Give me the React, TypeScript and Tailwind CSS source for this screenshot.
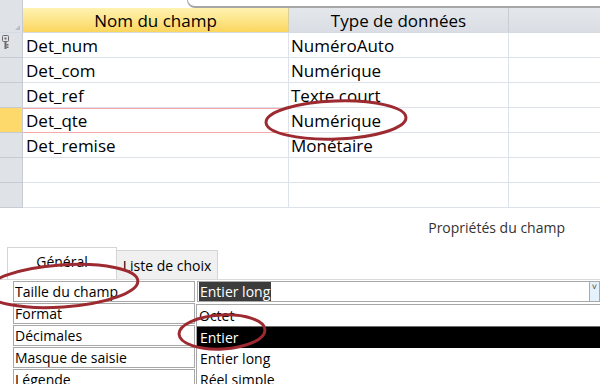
import React from "react";

const rows = [
  { name: "Det_num", type: "NuméroAuto", key: true },
  { name: "Det_com", type: "Numérique" },
  { name: "Det_ref", type: "Texte court" },
  { name: "Det_qte", type: "Numérique", current: true },
  { name: "Det_remise", type: "Monétaire" },
  { name: "", type: "" },
  { name: "", type: "" },
];

const props = ["Taille du champ", "Format", "Décimales", "Masque de saisie", "Légende"];

function KeyIcon() {
  return (
    <svg width="7" height="14" viewBox="0 0 7 14" className="ml-[2px]">
      <rect x="0.5" y="0.5" width="6" height="6" rx="1" fill="none" stroke="#6b6b6b" />
      <rect x="2.5" y="2.5" width="2" height="2" fill="#6b6b6b" />
      <rect x="2.5" y="7" width="2" height="7" fill="#6b6b6b" />
      <rect x="4.5" y="9" width="2" height="1.5" fill="#6b6b6b" />
      <rect x="4.5" y="11.5" width="2" height="1.5" fill="#6b6b6b" />
    </svg>
  );
}

export default function App() {
  return (
    <div className="relative h-[384px] w-[600px] overflow-hidden bg-white font-['Open_Sans',sans-serif] text-black">
      {/* top strip */}
      <div className="flex h-[8px]">
        <div className="w-[23px] border-r border-[#c8ccd2] bg-[#dfe3e8]" />
        <div className="w-[164px]" />
        <div className="flex-1 rounded-bl-[10px] border-b-2 border-l border-[#a6a6a6]" />
      </div>

      {/* header */}
      <div className="flex h-[25px] border-b border-[#d6dbe2]">
        <div className="relative w-[23px] border-r border-[#c8ccd2] bg-[#dfe3e8]">
          <div className="absolute right-[2px] bottom-[2px] h-0 w-0 border-b-[5px] border-l-[5px] border-b-[#b9bec5] border-l-transparent" />
        </div>
        <div className="flex w-[266px] items-center justify-center border-r border-[#d9cf9c] bg-gradient-to-b from-[#fff3b0] to-[#fbd65c] text-[17px] leading-none">
          Nom du champ
        </div>
        <div className="flex w-[220px] items-center justify-center border-r border-[#c9cdd3] bg-gradient-to-b from-[#e4e7eb] to-[#dadee4] text-[17px] leading-none">
          Type de données
        </div>
        <div className="flex-1 bg-gradient-to-b from-[#e4e7eb] to-[#dadee4]" />
      </div>

      {/* rows */}
      {rows.map((r, i) => (
        <div key={i} className="flex h-[25px]">
          <div
            className={`flex w-[23px] items-start border-r border-b border-[#c8ccd2] pt-[2px] ${
              r.current ? "bg-[#fcd96a]" : "bg-[#dfe3e8]"
            }`}
          >
            {r.key && <KeyIcon />}
          </div>
          <div
            className={`flex w-[266px] items-center border-r pl-[3px] text-[17px] leading-none ${
              r.current ? "border-y border-y-[#f6a7a7] border-r-[#dce1ea]" : "border-b border-[#dce1ea]"
            }`}
          >
            {r.name}
          </div>
          <div className="flex w-[220px] items-center border-r border-b border-[#dce1ea] pl-[2px] text-[17px] leading-none">
            {r.type}
          </div>
          <div className="flex-1 border-b border-[#dce1ea]" />
        </div>
      ))}

      {/* properties title */}
      <div className="flex h-[40px] items-center justify-end pr-[35px] text-[14px] leading-none text-[#333]">
        Propriétés du champ
      </div>

      {/* tabs */}
      <div className="flex h-[32px] items-end border-b border-[#dadada] pl-[7px]">
        <div className="flex h-[32px] w-[110px] items-start justify-center border border-b-0 border-[#d4d4d4] bg-white pt-[7px] text-[14px] leading-none">
          Général
        </div>
        <div className="flex h-[29px] w-[101px] items-center justify-center border border-l-0 border-b-0 border-[#d4d4d4] bg-[#f0f0f0] pt-[2px] text-[14px] leading-none">
          Liste de choix
        </div>
      </div>

      {/* property grid */}
      <div className="flex flex-col gap-[1px] pt-[1px]">
        {props.map((p, i) => (
          <div key={p} className="flex h-[21px]">
            <div className="ml-[13px] flex w-[182px] items-center border border-[#a8a8a8] pl-[1px] text-[14px] leading-none">
              {p}
            </div>
            {i === 0 ? (
              <div className="ml-[2px] flex flex-1 items-center border border-[#a8a8a8] pl-[1px]">
                <span className="bg-[#3c3c3c] px-[1px] text-[14px] leading-[19px] text-white">Entier long</span>
                <div className="ml-auto flex h-full w-[10px] items-start justify-center border-l border-[#7eb4ea] bg-[#e5f1fb] text-[9px] leading-[10px] text-[#444]">
                  ˅
                </div>
              </div>
            ) : (
              <div className="ml-[2px] flex-1" />
            )}
          </div>
        ))}
      </div>

      {/* dropdown list overlay */}
      <div className="absolute top-[304px] left-[196px] w-[404px] border-t border-l border-[#a8a8a8] bg-white text-[14px] leading-none">
        <div className="flex h-[21px] items-center pl-[2px]">Octet</div>
        <div className="flex h-[22px] items-center border-t border-[#6e6e6e] bg-black pl-[3px] text-white">Entier</div>
        <div className="flex h-[21px] items-center pl-[3px]">Entier long</div>
        <div className="flex h-[21px] items-center pl-[3px]">Réel simple</div>
      </div>

      {/* red annotation ellipses */}
      <svg className="pointer-events-none absolute inset-0" width="600" height="384" viewBox="0 0 600 384">
        <g fill="none" stroke="#9c2a30" strokeWidth="3">
          <ellipse cx="336" cy="120" rx="70" ry="19" transform="rotate(-2 336 120)" />
          <ellipse cx="62" cy="286" rx="76" ry="21" transform="rotate(-4 62 286)" />
          <ellipse cx="222" cy="332" rx="43" ry="17" transform="rotate(-3 222 332)" />
        </g>
      </svg>
    </div>
  );
}
